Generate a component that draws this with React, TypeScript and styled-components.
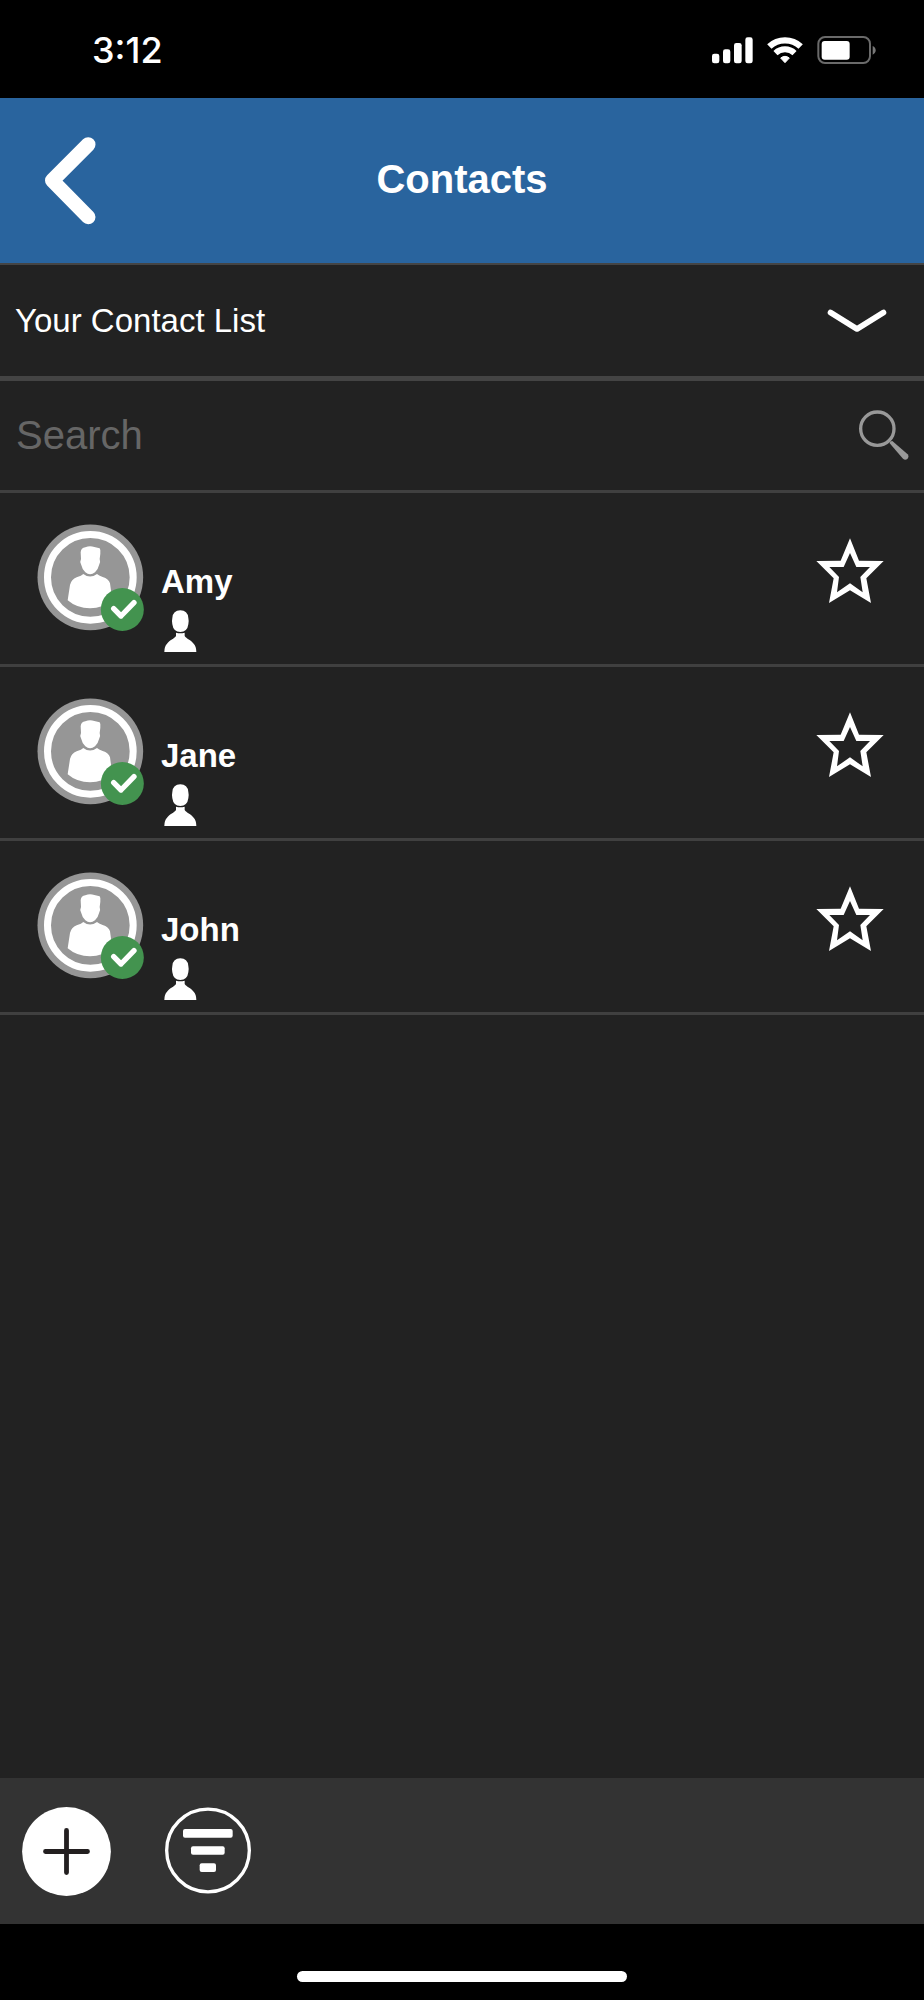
import React, { useState } from "react";
import styled, { createGlobalStyle } from "styled-components";

const GlobalStyle = createGlobalStyle`
  *, *::before, *::after { box-sizing: border-box; }
  body {
    margin: 0;
    background: #222222;
    color: #ffffff;
    font-family: "Liberation Sans", Arial, Helvetica, sans-serif;
  }
  svg { display: block; flex: none; }
  button {
    padding: 0;
    border: 0;
    background: none;
    color: inherit;
    font: inherit;
    cursor: pointer;
  }
`;

const Screen = styled.div`
  display: flex;
  flex-direction: column;
  min-height: 100vh;
`;

const StatusBar = styled.div`
  display: flex;
  align-items: center;
  justify-content: space-between;
  height: 98px;
  padding: 2px 48px 0 92px;
  background: #000000;
`;

const Clock = styled.time`
  font-family: Inter, "Liberation Sans", sans-serif;
  font-size: 36px;
  font-weight: 500;
  line-height: 40px;
`;

const StatusIcons = styled.div`
  display: flex;
  align-items: center;
  gap: 14px;
`;

const Header = styled.header`
  display: grid;
  grid-template-columns: 96px 1fr 96px;
  align-items: center;
  height: 167px;
  border-bottom: 2px solid #444444;
  background: #29649e;
`;

const BackButton = styled.button`
  justify-self: end;
`;

const Title = styled.h1`
  margin: 0;
  padding-bottom: 4px;
  font-size: 40px;
  font-weight: 700;
  line-height: 48px;
  text-align: center;
`;

const ListPicker = styled.label`
  display: grid;
  align-items: center;
  height: 116px;
  border-bottom: 5px solid #444444;

  > * { grid-area: 1 / 1; }
  svg {
    justify-self: end;
    margin-right: 37px;
    pointer-events: none;
  }
`;

const ListSelect = styled.select`
  width: 100%;
  height: 100%;
  padding: 0 112px 0 15px;
  border: 0;
  outline: 0;
  appearance: none;
  background: transparent;
  color: #ffffff;
  font-family: inherit;
  font-size: 33px;
`;

const SearchBar = styled.label`
  display: flex;
  align-items: center;
  height: 112px;
  padding: 0 15px 0 16px;
  border-bottom: 3px solid #404040;
`;

const SearchInput = styled.input`
  flex: 1;
  min-width: 0;
  height: 100%;
  padding: 0;
  border: 0;
  outline: 0;
  background: transparent;
  color: #ffffff;
  font-family: inherit;
  font-size: 40px;

  &::placeholder { color: #666666; opacity: 1; }
`;

const Main = styled.main`
  flex: 1;
`;

const ContactList = styled.ul`
  margin: 0;
  padding: 0;
  list-style: none;
`;

const ContactRow = styled.li`
  display: flex;
  align-items: flex-start;
  gap: 17px;
  height: 174px;
  padding: 31px 40px 0 37px;
  border-bottom: 3px solid #404040;
`;

const ContactInfo = styled.div`
  flex: 1;
  display: flex;
  flex-direction: column;
  gap: 9px;
  padding-top: 39px;

  svg { margin-left: 3px; }
`;

const ContactName = styled.span`
  font-size: 33px;
  font-weight: 700;
  line-height: 38px;
`;

const StarButton = styled.button`
  padding-top: 14px;
`;

const Toolbar = styled.footer`
  display: flex;
  align-items: flex-start;
  gap: 54px;
  height: 146px;
  padding: 29px 22px;
  background: #333333;
`;

const HomeArea = styled.div`
  display: flex;
  justify-content: center;
  height: 76px;
  padding-top: 47px;
  background: #000000;
`;

const HomeIndicator = styled.div`
  width: 330px;
  height: 11px;
  border-radius: 6px;
  background: #ffffff;
`;

const SignalIcon = () => (
  <svg width="41" height="28" viewBox="96 108 123 84" fill="#fff" aria-hidden="true">
    <rect x="96" y="161" width="22" height="29" rx="7" />
    <rect x="129" y="148" width="22" height="42" rx="7" />
    <rect x="162" y="129" width="23" height="61" rx="7" />
    <rect x="196" y="112" width="22" height="78" rx="7" />
  </svg>
);

const WifiIcon = () => (
  <svg width="36" height="28" viewBox="261 108 108 84" fill="none" stroke="#fff" aria-hidden="true">
    <path d="M268 139.5A69 69 0 0 1 362 139.5" strokeWidth="19" />
    <path d="M286.4 159.3A42 42 0 0 1 343.6 159.3" strokeWidth="18" />
    <path d="M302 174Q315 164 328 174L315 188Z" fill="#fff" strokeWidth="3" strokeLinejoin="round" />
  </svg>
);

const BatteryIcon = () => (
  <svg width="59" height="28" viewBox="412 108 177 84" aria-hidden="true">
    <rect x="416" y="111" width="155" height="78" rx="20" fill="none" stroke="#6a6a6a" strokeWidth="6" />
    <rect x="426" y="123" width="84" height="56" rx="9" fill="#fff" />
    <path d="M579 138Q588 142 588 151Q588 160 579 164Z" fill="#777" />
  </svg>
);

const BackIcon = () => (
  <svg width="51" height="88" viewBox="0 0 51 88" fill="none" stroke="#fff" strokeWidth="14.6" strokeLinecap="round" strokeLinejoin="round" aria-hidden="true">
    <path d="M43.2 7.5L7.3 43.5L43.2 80" />
  </svg>
);

const ChevronDownIcon = () => (
  <svg width="60" height="24" viewBox="0 0 60 24" fill="none" stroke="#fff" strokeWidth="5.6" strokeLinecap="round" strokeLinejoin="round" aria-hidden="true">
    <path d="M3.5 3.5L30 20L56.5 3.5" />
  </svg>
);

const SearchIcon = () => (
  <svg width="50" height="51" viewBox="237 450 150 153" aria-hidden="true">
    <circle cx="292" cy="506" r="50" fill="none" stroke="#999" strokeWidth="10" />
    <path d="M329 550Q328 543 337 543L383 583Q388 590 382 597Q375 602 369 596Z" fill="#999" />
  </svg>
);

const AvatarIcon = () => (
  <svg width="107" height="107" viewBox="52 101 321 321" role="img" aria-label="Available">
    <circle cx="212" cy="261" r="158.5" fill="#969696" />
    <circle cx="212" cy="261" r="128.5" fill="none" stroke="#fff" strokeWidth="21" />
    <path
      fill="#fff"
      d="M184 206L183 186Q184 173 197 171Q210 165 224 170L240 174Q244 179 242 190L240 206Q243 214 239 222Q236 236 226 246Q211 258 197 246Q187 236 184 222Q180 214 184 206Z"
    />
    <path
      fill="#fff"
      d="M191 251Q211 266 232 251Q237 256 249 260Q267 265 271 279L278 330Q250 354 211 354Q172 354 144 330L151 284Q155 267 171 261Q186 256 191 251Z"
    />
    <circle cx="308" cy="357.5" r="64.5" fill="#43934f" />
    <path d="M282 355L304 377L343 337" fill="none" stroke="#fff" strokeWidth="16" strokeLinecap="round" strokeLinejoin="round" />
  </svg>
);

const PersonIcon = () => (
  <svg width="33" height="42" viewBox="434 360 99 126" fill="#fff" aria-hidden="true">
    <path d="M459 384Q461 361 483 361Q505 361 507 384Q509 392 507 403Q504 426 483 426Q462 426 459 403Q457 392 459 384Z" />
    <path d="M470 428Q483 432 496 428V438C501 446 515 450 523 461Q531 469 531 486H435Q435 469 443 461C451 450 465 446 470 438Z" />
  </svg>
);

const StarIcon = ({ filled }: { filled: boolean }) => (
  <svg width="68" height="66" viewBox="78 85 204 198" fill="#fff" fillRule="evenodd" aria-hidden="true">
    <path
      d={
        "M180 86L207 153L281 154L229 206L243 280L180 242L117 280L131 206L79 154L152 153Z" +
        (filled ? "" : "M180 130L161 172L118 172L147 202L141 248L180 221L218 248L211 202L240 172L199 172Z")
      }
    />
  </svg>
);

const AddIcon = () => (
  <svg width="89" height="89" viewBox="0 0 89 89" aria-hidden="true">
    <circle cx="44.5" cy="44.5" r="44.4" fill="#fff" />
    <path d="M44.5 23.5V65.5M23.5 44.5H65.5" stroke="#231f20" strokeWidth="4.8" strokeLinecap="round" />
  </svg>
);

const FilterIcon = () => (
  <svg width="86" height="87" viewBox="495 111 258 261" fill="#fff" aria-hidden="true">
    <circle cx="624" cy="241.5" r="124" fill="none" stroke="#fff" strokeWidth="10" />
    <rect x="549" y="177" width="149" height="26" rx="6" />
    <rect x="573" y="229" width="101" height="25" rx="6" />
    <rect x="599" y="280" width="49" height="26" rx="6" />
  </svg>
);

const contacts = ["Amy", "Jane", "John"];

function Contact({ name }: { name: string }) {
  const [starred, setStarred] = useState(false);
  return (
    <ContactRow>
      <AvatarIcon />
      <ContactInfo>
        <ContactName>{name}</ContactName>
        <PersonIcon />
      </ContactInfo>
      <StarButton
        type="button"
        aria-label={`Favorite ${name}`}
        aria-pressed={starred}
        onClick={() => setStarred(!starred)}
      >
        <StarIcon filled={starred} />
      </StarButton>
    </ContactRow>
  );
}

export default function App() {
  const [query, setQuery] = useState("");
  const visible = contacts.filter((name) => name.toLowerCase().includes(query.toLowerCase()));

  return (
    <>
      <GlobalStyle />
      <Screen>
        <StatusBar>
          <Clock>3:12</Clock>
          <StatusIcons>
            <SignalIcon />
            <WifiIcon />
            <BatteryIcon />
          </StatusIcons>
        </StatusBar>
        <Header>
          <BackButton type="button" aria-label="Back">
            <BackIcon />
          </BackButton>
          <Title>Contacts</Title>
        </Header>
        <ListPicker>
          <ListSelect aria-label="Contact list">
            <option>Your Contact List</option>
          </ListSelect>
          <ChevronDownIcon />
        </ListPicker>
        <SearchBar>
          <SearchInput
            type="text"
            aria-label="Search"
            placeholder="Search"
            value={query}
            onChange={(event) => setQuery(event.target.value)}
          />
          <SearchIcon />
        </SearchBar>
        <Main>
          <ContactList>
            {visible.map((name) => (
              <Contact key={name} name={name} />
            ))}
          </ContactList>
        </Main>
        <Toolbar>
          <button type="button" aria-label="Add contact">
            <AddIcon />
          </button>
          <button type="button" aria-label="Filter contacts">
            <FilterIcon />
          </button>
        </Toolbar>
        <HomeArea>
          <HomeIndicator />
        </HomeArea>
      </Screen>
    </>
  );
}
